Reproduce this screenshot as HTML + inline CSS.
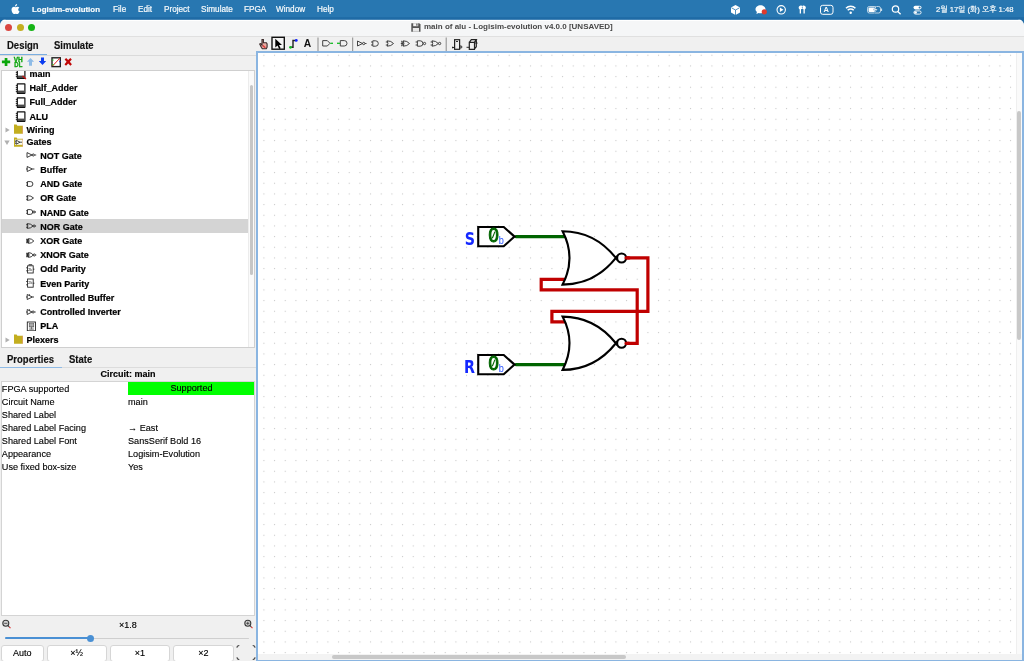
<!DOCTYPE html>
<html lang="ko">
<head>
<meta charset="utf-8">
<title>main of alu - Logisim-evolution v4.0.0 [UNSAVED]</title>
<style>
*{box-sizing:border-box;margin:0;padding:0}
html,body{width:1024px;height:661px;overflow:hidden}
body{position:relative;background:#1f6ba6;font-family:"Liberation Sans","NanumGothic",sans-serif;font-size:9px;color:#111}
.abs{position:absolute}
#menubar{will-change:transform;position:absolute;left:0;top:0;width:1024px;height:19px;background:linear-gradient(#2877b1 0,#2877b1 16.8px,#1f6ba6 17.6px,#1f6ba6 19px);color:#fff}
#menubar span{position:absolute;top:0.2px;height:19px;line-height:19px;font-size:8.2px;white-space:nowrap;color:#f6fafc;-webkit-text-stroke:0.2px #f6fafc}
#menubar .app{font-weight:bold;font-size:7.9px;-webkit-text-stroke:0.2px #f6fafc}
#win{will-change:transform;position:absolute;left:0;top:19px;width:1024px;height:642px;background:#f0f0f0;border-radius:6.5px 6.5px 0 0;overflow:hidden}
#wi{position:absolute;left:0;top:0;width:1024px;height:642px}
#titlebar{position:absolute;left:0;top:0;width:1024px;height:17.8px;background:linear-gradient(#1f6ba6 0,#1f6ba6 0.45px,#fff 0.75px,#fff 1.7px,#f5f6f7 2.1px,#f5f6f7 100%);border-bottom:1px solid #e0e0e0}
.tl{position:absolute;top:5.1px;width:7px;height:7px;border-radius:50%}
#title{position:absolute;left:424px;top:0.3px;height:16px;line-height:16px;font-size:8px;font-weight:bold;color:#484848;white-space:nowrap}
#left{position:absolute;left:0;top:0;width:256px;height:642px}
.tab{position:absolute;font-family:"Liberation Sans",sans-serif;font-weight:bold;font-size:9.5px;color:#111;-webkit-text-stroke:0.15px #111;white-space:nowrap;line-height:12px;transform:scaleY(1.08);transform-origin:0 80%}
#tree{position:absolute;left:1px;top:51px;width:254px;height:278px;background:#fff;border:1px solid #cfcfcf;overflow:hidden}
.row{position:absolute;left:0;width:246.2px;white-space:nowrap}
.row b{position:absolute;top:0;line-height:14.2px;font-size:9px;font-weight:bold;color:#000;-webkit-text-stroke:0.2px #000}
#ptable{position:absolute;left:1px;top:362px;width:254px;height:235px;background:#fff;border:1px solid #d4d4d4;overflow:hidden}
.prop{position:absolute;font-size:9.15px;line-height:13px;white-space:nowrap;color:#000;-webkit-text-stroke:0.12px #000}
.btn{position:absolute;height:17px;background:#fff;border:1px solid #d6d6d6;border-radius:3px;text-align:center;font-size:9px;line-height:15px;color:#000;-webkit-text-stroke:0.15px #000}
#canvas{position:absolute;left:256px;top:32px;width:768px;height:611px;background:#fff;border:2px solid #8ab5e1;overflow:hidden}
</style>
</head>
<body>
<div id="menubar">
  <svg class="abs" style="left:11px;top:4px" width="9" height="11" viewBox="0 0 9 11"><path d="M6.1 0c.1.7-.2 1.300-.6 1.700-.4.500-1 .8-1.500.7-.1-.6.200-1.300.6-1.700C5 .3 5.600 0 6.100 0zM8.300 3.700c-.1.100-1.100.7-1.100 1.900 0 1.400 1.300 1.900 1.300 1.900s-.9 2.600-2.100 2.600c-.6 0-1-.4-1.600-.4-.6 0-1.100.4-1.600.4C2.100 10.200.5 7.800.5 5.800c0-2 1.300-3 2.500-3 .7 0 1.300.4 1.700.4.400 0 1.100-.5 1.900-.5.700 0 1.300.4 1.700 1z" fill="#fff"/></svg>
  <span class="app" style="left:32px">Logisim-evolution</span>
  <span style="left:113px">File</span>
  <span style="left:138px">Edit</span>
  <span style="left:164px">Project</span>
  <span style="left:201px">Simulate</span>
  <span style="left:244px">FPGA</span>
  <span style="left:276px">Window</span>
  <span style="left:317px">Help</span>
  <span style="left:936px;font-size:7.700px">2월 17일 (화) 오후 1:48</span>
  <svg class="abs" style="left:724px;top:0" width="210" height="19" viewBox="724 0 210 19" fill="none" stroke="#fff" stroke-width="1">
    <path d="M731 7.500l4.500-2.500 4.500 2.500v5l-4.500 2.500-4.500-2.500z" fill="#fff" stroke="none"/><path d="M735.500 10v5" stroke="#2877b1" stroke-width="0.800"/><path d="M731.500 7.800l4 2.200 4-2.200" stroke="#2877b1" stroke-width="0.800"/>
    <path d="M755.500 9.300c0-2.300 2.300-4 5-4s5 1.700 5 4-2.300 4-5 4c-.6 0-1.200-.1-1.800-.3l-2.300 1 .5-2c-.9-.7-1.400-1.700-1.400-2.700z" fill="#fff" stroke="none"/><circle cx="764.300" cy="11.800" r="2.600" fill="#e0392b" stroke="none"/>
    <circle cx="781.200" cy="9.800" r="4.200" stroke-width="1.100"/><path d="M779.900 7.600v4.400l3.600-2.200z" fill="#fff" stroke="none"/>
    <path d="M799.500 6a1.900 1.900 0 1 1 1.500 3.300v4.200h-1.300v-4.100a2 2 0 0 1-.2-3.400zM805 6a1.900 1.900 0 1 0-1.500 3.300v4.200h1.300v-4.100a2 2 0 0 0 .2-3.400z" fill="#fff" stroke="none"/>
    <rect x="820.500" y="5.300" width="12.500" height="9" rx="2.200" stroke-width="1"/>
    <path d="M846 8.200a6.500 6.500 0 0 1 9.400 0M847.700 10.200a4.200 4.200 0 0 1 6 0" stroke-width="1.500"/><circle cx="850.700" cy="12.700" r="1.200" fill="#fff" stroke="none"/>
    <rect x="867.500" y="6.500" width="13" height="6.500" rx="1.800" stroke-width="0.900" opacity=".75"/><rect x="868.500" y="7.500" width="6.500" height="4.500" rx="1" fill="#fff" stroke="none"/><path d="M881.500 8.500v2.500" stroke-width="1.200" opacity=".75"/><path d="M875.500 6l-2 4h2l-1 3.500 3-4.500h-2l1-3z" fill="#fff" stroke="#2877b1" stroke-width="0.400"/>
    <circle cx="895.500" cy="9" r="3.200" stroke-width="1.200"/><path d="M897.800 11.500l2.800 2.800" stroke-width="1.300"/>
    <rect x="913.500" y="5.800" width="8" height="3.600" rx="1.800" fill="#fff" stroke="none"/><circle cx="919.600" cy="7.600" r="1" fill="#2877b1" stroke="none"/><rect x="913.900" y="10.900" width="7.200" height="3.200" rx="1.600" stroke-width="0.900"/><circle cx="915.600" cy="12.500" r="1.300" fill="#fff" stroke="none"/>
  </svg>
  <span style="left:823.500px;font-size:7.500px;font-weight:bold;top:0.300px;-webkit-text-stroke:0">A</span>
</div>
<div id="win"><div id="wi">
  <div id="titlebar">
    <div class="tl" style="left:4.700px;background:#da4640"></div>
    <div class="tl" style="left:16.700px;background:#c4ae20"></div>
    <div class="tl" style="left:28.400px;background:#16b416"></div>
    <svg class="abs" style="left:411px;top:3.800px" width="10" height="9" viewBox="0 0 10 9"><path d="M0.300 0.200h8l1.200 1.200v7.300h-9.200z" fill="#555"/><rect x="2.200" y="0.200" width="5" height="3" fill="#f2f2f2"/><rect x="5.300" y="0.600" width="1.200" height="2.100" fill="#555"/><rect x="1.800" y="5" width="6.200" height="3.700" fill="#e8e8e8"/></svg>
    <div id="title">main of alu - Logisim-evolution v4.0.0 [UNSAVED]</div>
  </div>
<div id="left">
<div class="tab" style="left:7px;top:20.800px">Design</div>
<div class="tab" style="left:54px;top:20.800px">Simulate</div>
<div class="abs" style="left:0;top:35.700px;width:256px;height:1px;background:#dadada"></div>
<div class="abs" style="left:0;top:34.5px;width:47px;height:1.5px;background:#7aaee0"></div>
<svg class="abs" style="left:0;top:37px" width="80" height="13" viewBox="0 56 80 13">
<path d="M4.700 57.900h2.700v2.700h2.800v2.700h-2.800v2.700h-2.700v-2.700h-2.800v-2.700h2.800z" fill="#0aa60a"/>
<text x="13.800" y="61.900" font-family="Liberation Sans,sans-serif" font-weight="bold" font-size="6.600" fill="#0aa60a" stroke="#0aa60a" stroke-width="0.300" textLength="9" lengthAdjust="spacingAndGlyphs">VH</text>
<text x="14.300" y="66.800" font-family="Liberation Sans,sans-serif" font-weight="bold" font-size="6.600" fill="#0aa60a" stroke="#0aa60a" stroke-width="0.300" textLength="8" lengthAdjust="spacingAndGlyphs">DL</text>
<path d="M30.500 57.900l3.600 3.900h-2.100v3.900h-3v-3.900h-2.100z" fill="#8ebbe6"/>
<path d="M42.500 65l3.700-3.900h-2.200v-3.700h-3v3.700h-2.200z" fill="#0a3cf0"/>
<rect x="52" y="57.800" width="8.300" height="8.800" fill="#fff" stroke="#222" stroke-width="1.400"/>
<path d="M52.500 66l7.500-8" stroke="#e02020" stroke-width="1" fill="none"/>
<rect x="52.300" y="59.500" width="1.200" height="1.200" fill="#1c1"/><rect x="52.300" y="64" width="1.200" height="1.200" fill="#1c1"/><rect x="59.300" y="61" width="1.200" height="1.200" fill="#22f"/>
<path d="M64.600 59.500l1.500-1.500 2.100 2.100 2.100-2.100 1.500 1.500-2 2.300 2.100 2.400-1.500 1.500-2.200-2.200-2.200 2.200-1.500-1.500 2.100-2.400z" fill="#c00808"/>
</svg>
<div id="tree">
<div class="row" style="top:-4.06px;height:14.22px"><svg class="abs" style="left:13px;top:1.5px" width="12" height="12" viewBox="0 0 12 12"><rect x="2.300" y="0.800" width="7.600" height="9.600" rx="0.300" fill="#fff" stroke="#111" stroke-width="1.200"/><rect x="2.900" y="7.600" width="6.400" height="2.400" fill="#4a4a4a"/><path d="M0.800 2.600h1.500M0.800 4.600h1.500M0.800 6.600h1.500M0.800 8.600h1.500" stroke="#111" stroke-width="0.900"/><path d="M7.500 8l3.500 3" stroke="#d01010" stroke-width="1.200"/></svg><b style="left:27.5px">main</b></div>
<div class="row" style="top:10.16px;height:14.22px"><svg class="abs" style="left:13px;top:1.5px" width="12" height="12" viewBox="0 0 12 12"><rect x="2.300" y="0.800" width="7.600" height="9.600" rx="0.300" fill="#fff" stroke="#111" stroke-width="1.200"/><rect x="2.900" y="7.600" width="6.400" height="2.400" fill="#4a4a4a"/><path d="M0.800 2.600h1.500M0.800 4.600h1.500M0.800 6.600h1.500M0.800 8.600h1.500" stroke="#111" stroke-width="0.900"/></svg><b style="left:27.5px">Half_Adder</b></div>
<div class="row" style="top:24.38px;height:14.22px"><svg class="abs" style="left:13px;top:1.5px" width="12" height="12" viewBox="0 0 12 12"><rect x="2.300" y="0.800" width="7.600" height="9.600" rx="0.300" fill="#fff" stroke="#111" stroke-width="1.200"/><rect x="2.900" y="7.600" width="6.400" height="2.400" fill="#4a4a4a"/><path d="M0.800 2.600h1.500M0.800 4.600h1.500M0.800 6.600h1.500M0.800 8.600h1.500" stroke="#111" stroke-width="0.900"/></svg><b style="left:27.5px">Full_Adder</b></div>
<div class="row" style="top:38.60px;height:14.22px"><svg class="abs" style="left:13px;top:1.5px" width="12" height="12" viewBox="0 0 12 12"><rect x="2.300" y="0.800" width="7.600" height="9.600" rx="0.300" fill="#fff" stroke="#111" stroke-width="1.200"/><rect x="2.900" y="7.600" width="6.400" height="2.400" fill="#4a4a4a"/><path d="M0.800 2.600h1.500M0.800 4.600h1.500M0.800 6.600h1.500M0.800 8.600h1.500" stroke="#111" stroke-width="0.900"/></svg><b style="left:27.5px">ALU</b></div>
<div class="row" style="top:52.82px;height:12.44px"><svg class="abs" style="left:2.500px;top:3.400px" width="6" height="6" viewBox="0 0 6 6"><path d="M0.500 0.400l4.200 2.600-4.200 2.600z" fill="#b0b0b0"/></svg><svg class="abs" style="left:11px;top:0.300px" width="12" height="11" viewBox="0 0 12 11"><path d="M1 0.600h2.600l0.800 1.200h5.300v7.900h-8.700z" fill="#c3ae1f"/><rect x="9.400" y="1.800" width="0.500" height="7.900" fill="#e06050" opacity=".7"/></svg><b style="left:24.5px;line-height:12.44px">Wiring</b></div>
<div class="row" style="top:65.26px;height:12.44px"><svg class="abs" style="left:2.200px;top:3.800px" width="6" height="6" viewBox="0 0 6 6"><path d="M0.300 0.600h5.400l-2.700 4.400z" fill="#b0b0b0"/></svg><svg class="abs" style="left:11px;top:0.300px" width="12" height="11" viewBox="0 0 12 11"><path d="M1 0.600h2.600l0.800 1.200h5.300v7.900h-8.700z" fill="#c3ae1f"/><rect x="9.400" y="1.800" width="0.500" height="7.900" fill="#e06050" opacity=".7"/><rect x="2" y="2.600" width="7.500" height="5.200" fill="#fbfbf4"/><path d="M3.200 3.200v4l3.800-2z M2 4.200h1.200M2 6.200h1.200M7 5.200h2" fill="none" stroke="#222" stroke-width="0.800"/></svg><b style="left:24.5px;line-height:12.44px">Gates</b></div>
<div class="row" style="top:77.70px;height:14.22px"><svg class="abs" style="left:24px;top:1.500px" width="11" height="10" viewBox="0 0 11 10"><path d="M1 2.600v4.800l5-2.400z" fill="none" stroke="#1c1c1c" stroke-width="0.850"/><circle cx="7.300" cy="5" r="1.050" fill="none" stroke="#1c1c1c" stroke-width="0.850"/><path d="M8.400 5h1.800" fill="none" stroke="#1c1c1c" stroke-width="0.850"/></svg><b style="left:38.300px">NOT Gate</b></div>
<div class="row" style="top:91.92px;height:14.22px"><svg class="abs" style="left:24px;top:1.500px" width="11" height="10" viewBox="0 0 11 10"><path d="M1.200 2.500v5l5.200-2.500zM6.400 5h2M0 5h1.200" fill="none" stroke="#1c1c1c" stroke-width="0.850"/></svg><b style="left:38.300px">Buffer</b></div>
<div class="row" style="top:106.14px;height:14.22px"><svg class="abs" style="left:24px;top:1.500px" width="11" height="10" viewBox="0 0 11 10"><path d="M1.500 2.600h3a2.400 2.400 0 0 1 0 4.800h-3zM0 3.800h1.500M0 6.200h1.500" fill="none" stroke="#1c1c1c" stroke-width="0.850"/></svg><b style="left:38.300px">AND Gate</b></div>
<div class="row" style="top:120.36px;height:14.22px"><svg class="abs" style="left:24px;top:1.500px" width="11" height="10" viewBox="0 0 11 10"><path d="M1.200 2.600q4 0 6.300 2.400q-2.300 2.400-6.300 2.400q1.300-2.400 0-4.800zM0 3.800h1.800M0 6.200h1.800" fill="none" stroke="#1c1c1c" stroke-width="0.850"/></svg><b style="left:38.300px">OR Gate</b></div>
<div class="row" style="top:134.58px;height:14.22px"><svg class="abs" style="left:24px;top:1.500px" width="11" height="10" viewBox="0 0 11 10"><path d="M1.500 2.600h2.800a2.400 2.400 0 0 1 0 4.800h-2.800zM0 3.800h1.500M0 6.200h1.500" fill="none" stroke="#1c1c1c" stroke-width="0.850"/><circle cx="8" cy="5" r="1.050" fill="none" stroke="#1c1c1c" stroke-width="0.850"/><path d="M9 5h1" fill="none" stroke="#1c1c1c" stroke-width="0.850"/></svg><b style="left:38.300px">NAND Gate</b></div>
<div class="row" style="top:148.80px;height:14.22px"><div class="abs" style="left:0;top:-1px;width:246.200px;height:14.22px;background:#d4d4d4"></div><svg class="abs" style="left:24px;top:1.500px" width="11" height="10" viewBox="0 0 11 10"><path d="M1.200 2.600q3.800 0 5.800 2.400q-2 2.400-5.800 2.400q1.300-2.400 0-4.800zM0 3.800h1.800M0 6.200h1.800" fill="none" stroke="#1c1c1c" stroke-width="0.850"/><circle cx="8.100" cy="5" r="1.050" fill="none" stroke="#1c1c1c" stroke-width="0.850"/><path d="M9.100 5h1" fill="none" stroke="#1c1c1c" stroke-width="0.850"/></svg><b style="left:38.300px">NOR Gate</b></div>
<div class="row" style="top:163.02px;height:14.22px"><svg class="abs" style="left:24px;top:1.500px" width="11" height="10" viewBox="0 0 11 10"><path d="M2.400 2.600q3.400 0 5.400 2.400q-2 2.400-5.400 2.400q1.300-2.400 0-4.800zM1 2.600q1.300 2.400 0 4.800M0 3.800h2.900M0 5h3M0 6.200h2.900" fill="none" stroke="#1c1c1c" stroke-width="0.850"/></svg><b style="left:38.300px">XOR Gate</b></div>
<div class="row" style="top:177.24px;height:14.22px"><svg class="abs" style="left:24px;top:1.500px" width="11" height="10" viewBox="0 0 11 10"><path d="M2.400 2.600q3.200 0 4.800 2.400q-1.600 2.400-4.800 2.400q1.300-2.400 0-4.800zM1 2.600q1.300 2.400 0 4.800M0 3.800h2.900M0 5h3M0 6.200h2.900" fill="none" stroke="#1c1c1c" stroke-width="0.850"/><circle cx="8.300" cy="5" r="1.050" fill="none" stroke="#1c1c1c" stroke-width="0.850"/><path d="M9.300 5h1" fill="none" stroke="#1c1c1c" stroke-width="0.850"/></svg><b style="left:38.300px">XNOR Gate</b></div>
<div class="row" style="top:191.46px;height:14.22px"><svg class="abs" style="left:24px;top:1.500px" width="11" height="10" viewBox="0 0 11 10"><rect x="1.600" y="1.800" width="5.600" height="7.200" fill="none" stroke="#1c1c1c" stroke-width="0.850"/><path d="M2.600 0.700h3.600M0.200 3.800h1.400M0.200 6.800h1.400M7.200 5.200h1.200" fill="none" stroke="#1c1c1c" stroke-width="0.850"/><text x="2.300" y="7" font-family="Liberation Sans,sans-serif" font-size="3.600" fill="#111">2k</text></svg><b style="left:38.300px">Odd Parity</b></div>
<div class="row" style="top:205.68px;height:14.22px"><svg class="abs" style="left:24px;top:1.500px" width="11" height="10" viewBox="0 0 11 10"><rect x="1.600" y="1" width="5.600" height="8.200" fill="none" stroke="#1c1c1c" stroke-width="0.850"/><path d="M0.200 3.500h1.400M0.200 6.800h1.400M7.200 5.200h1.200" fill="none" stroke="#1c1c1c" stroke-width="0.850"/><text x="2.200" y="6.300" font-family="Liberation Sans,sans-serif" font-size="4" fill="#111">2k</text></svg><b style="left:38.300px">Even Parity</b></div>
<div class="row" style="top:219.90px;height:14.22px"><svg class="abs" style="left:24px;top:1.500px" width="11" height="10" viewBox="0 0 11 10"><path d="M1.200 2.500v5l5.200-2.500zM6.400 5h1.600M0 5h1.200M3.400 2.200v1.400" fill="none" stroke="#1c1c1c" stroke-width="0.850"/></svg><b style="left:38.300px">Controlled Buffer</b></div>
<div class="row" style="top:234.12px;height:14.22px"><svg class="abs" style="left:24px;top:1.500px" width="11" height="10" viewBox="0 0 11 10"><path d="M1.200 2.500v5l4.800-2.500zM0 5h1.200M3.400 2.200v1.400" fill="none" stroke="#1c1c1c" stroke-width="0.850"/><circle cx="7.100" cy="5" r="1.050" fill="none" stroke="#1c1c1c" stroke-width="0.850"/><path d="M8.200 5h1.500" fill="none" stroke="#1c1c1c" stroke-width="0.850"/></svg><b style="left:38.300px">Controlled Inverter</b></div>
<div class="row" style="top:248.34px;height:14.22px"><svg class="abs" style="left:24px;top:1.500px" width="11" height="10" viewBox="0 0 11 10"><rect x="1.300" y="1" width="8.200" height="8.800" fill="#fff" stroke="#222" stroke-width="0.900"/><rect x="3.200" y="2.600" width="4.600" height="3.200" fill="#aaa" stroke="#444" stroke-width="0.500"/><path d="M3.200 7h4.600M3.200 8.300h4.600M5.500 5.800v2.500" stroke="#444" stroke-width="0.600"/></svg><b style="left:38.300px">PLA</b></div>
<div class="row" style="top:262.56px;height:12.44px"><svg class="abs" style="left:2.500px;top:3.400px" width="6" height="6" viewBox="0 0 6 6"><path d="M0.500 0.400l4.200 2.600-4.200 2.600z" fill="#b0b0b0"/></svg><svg class="abs" style="left:11px;top:0.300px" width="12" height="11" viewBox="0 0 12 11"><path d="M1 0.600h2.600l0.800 1.200h5.300v7.900h-8.700z" fill="#c3ae1f"/><rect x="9.400" y="1.800" width="0.500" height="7.900" fill="#e06050" opacity=".7"/></svg><b style="left:24.5px;line-height:12.44px">Plexers</b></div>
<div class="abs" style="left:246.200px;top:0;width:6.800px;height:277px;background:#fafafa;border-left:1px solid #ececec"></div>
<div class="abs" style="left:247.600px;top:14px;width:3.500px;height:190.300px;background:#c6c6c6;border-radius:2px"></div>
</div>
<div class="tab" style="left:7px;top:334.5px">Properties</div>
<div class="tab" style="left:69px;top:334.5px">State</div>
<div class="abs" style="left:0;top:348px;width:256px;height:1px;background:#dcdcdc"></div>
<div class="abs" style="left:0;top:347.500px;width:62px;height:1.500px;background:#8fbbe6"></div>
<div class="abs" style="left:0;top:349px;width:256px;height:13px;line-height:13px;text-align:center;font-weight:bold;font-size:9px;color:#000;-webkit-text-stroke:0.150px #000">Circuit: main</div>
<div id="ptable">
<div class="prop" style="left:-0.200px;top:0.70px">FPGA supported</div>
<div class="prop" style="left:126px;top:0.20px;width:127px;height:12.700px;line-height:13px;background:#00ff00;text-align:center">Supported</div>
<div class="prop" style="left:-0.200px;top:13.74px">Circuit Name</div>
<div class="prop" style="left:126px;top:13.74px">main</div>
<div class="prop" style="left:-0.200px;top:26.78px">Shared Label</div>
<div class="prop" style="left:-0.200px;top:39.82px">Shared Label Facing</div>
<div class="prop" style="left:126px;top:39.82px"><b>→</b> East</div>
<div class="prop" style="left:-0.200px;top:52.86px">Shared Label Font</div>
<div class="prop" style="left:126px;top:52.86px">SansSerif Bold 16</div>
<div class="prop" style="left:-0.200px;top:65.90px">Appearance</div>
<div class="prop" style="left:126px;top:65.90px">Logisim-Evolution</div>
<div class="prop" style="left:-0.200px;top:78.94px">Use fixed box-size</div>
<div class="prop" style="left:126px;top:78.94px">Yes</div>
</div>
<svg class="abs" style="left:1.400px;top:599.400px" width="12" height="13" viewBox="0 0 12 13"><circle cx="4.800" cy="5.300" r="3" fill="#d4d4d4" stroke="#3a3a3a" stroke-width="1.100"/><path d="M3.200 5.300h3.200" stroke="#333" stroke-width="0.800"/><path d="M7.200 7.700l1 1.100" stroke="#333" stroke-width="1.100"/><path d="M8.200 8.800l1.300 1.400" stroke="#d33" stroke-width="1.100"/></svg>
<svg class="abs" style="left:242.600px;top:599.400px" width="12" height="13" viewBox="0 0 12 13"><circle cx="4.800" cy="5.300" r="3" fill="#d4d4d4" stroke="#3a3a3a" stroke-width="1.100"/><path d="M3.200 5.300h3.200M4.800 3.700v3.200" stroke="#333" stroke-width="0.800"/><path d="M7.200 7.700l1 1.100" stroke="#333" stroke-width="1.100"/><path d="M8.200 8.800l1.300 1.400" stroke="#d33" stroke-width="1.100"/></svg>
<div class="abs" style="left:0;top:600px;width:256px;height:12px;line-height:12px;text-align:center;font-size:9px;color:#000;-webkit-text-stroke:0.150px #000">×1.8</div>
<div class="abs" style="left:5px;top:618.500px;width:244px;height:1.200px;background:#cfcfcf;border-radius:1px"></div>
<div class="abs" style="left:5px;top:618.300px;width:85px;height:1.500px;background:#4a90d4;border-radius:1px"></div>
<div class="abs" style="left:86.500px;top:615.500px;width:7px;height:7px;border-radius:50%;background:#4a90d4"></div>
<div class="btn" style="left:1px;top:626.200px;width:42.6px">Auto</div>
<div class="btn" style="left:46.6px;top:626.200px;width:60.3px">×½</div>
<div class="btn" style="left:109.6px;top:626.200px;width:60.4px">×1</div>
<div class="btn" style="left:172.8px;top:626.200px;width:61px">×2</div>
<svg class="abs" style="left:236px;top:625.300px" width="20" height="16" viewBox="0 0 20 16"><path d="M1 3.800q0-2.300 2.300-2.300M16.700 1.500q2.300 0 2.300 2.300M1 13.200q0 2.300 2.300 2.300M19 13.200q0 2.300-2.300 2.300" fill="none" stroke="#444" stroke-width="1.100"/></svg>
</div>
<svg class="abs" style="left:256px;top:17px" width="230" height="17" viewBox="256 36 230 17">
<g fill="none" stroke="#333" stroke-width="1">
<path d="M261.300 47.300l-1.600-3.200 1-.5 1.300 1.500v-5.600h1.400v3.200h3l.7 1.200v3.300l-.8 1.600h-4z" fill="#e9a9a0" stroke="#3a2a2a" stroke-width="1.100"/>
<path d="M262.800 45.500l2.600 2.200" stroke="#e03030" stroke-width="1.200"/>
<rect x="272" y="37.300" width="12.300" height="11.900" fill="#f4f4f4" stroke="#111" stroke-width="1.400"/>
<path d="M275.300 38.800v8.800l2.200-2.100 1.700 3.400 1.500-.7-1.700-3.300h3z" fill="#000" stroke="none"/>
<path d="M290.600 47.300h2.400v-6.800h3" stroke="#222" stroke-width="1.400"/><circle cx="290.500" cy="47.300" r="1.400" fill="#1b2" stroke="none"/><circle cx="296.300" cy="40.400" r="1.400" fill="#12f" stroke="none"/>
</g>
<text x="303.700" y="46.600" font-family="Liberation Sans,sans-serif" font-weight="bold" font-size="10.300" fill="#111">A</text>
<path d="M318 37.500v14M352.700 37.500v14M446.200 37.500v14" stroke="#8a8a8a" stroke-width="1"/>
<g fill="none" stroke="#3a3a3a" stroke-width="0.950">
<path d="M322.700 40.600h4.600l2.700 2.700-2.700 2.700h-4.600z"/><path d="M330.300 43.300h2.700" stroke="#1b2" stroke-width="1.300"/>
<path d="M340.300 40.600h4a2.700 2.700 0 0 1 0 5.400h-4z"/><path d="M337 43.300h3" stroke="#1b2" stroke-width="1.300"/>
<path d="M357.5 41.0v5l5-2.500zM365 43.5h1.500"/><circle cx="363.7" cy="43.5" r="1.150"/>
<path d="M372.8 40.8h2.800a2.700 2.700 0 0 1 0 5.400h-2.800zM371 42.0h1.8M371 45.0h1.8"/>
<path d="M387.2 40.8q4 0 6.300 2.700q-2.300 2.700-6.300 2.700q1.400-2.700 0-5.400zM385.8 42.0h2.2M385.8 45.0h2.2"/>
<path d="M403.2 40.8q4 0 6.300 2.700q-2.300 2.700-6.300 2.700q1.400-2.700 0-5.400zM401.8 42.0h2.2M401.8 45.0h2.2"/><path d="M401.600 40.8q1.400 2.700 0 5.400M400.800 43.5h2.800"/>
<path d="M417.40000000000003 40.8h2.800a2.700 2.700 0 0 1 0 5.400h-2.800zM415.6 42.0h1.8M415.6 45.0h1.8"/><circle cx="424.500" cy="43.5" r="1.150"/>
<path d="M432.0 40.8q4 0 6.300 2.700q-2.300 2.700-6.300 2.700q1.400-2.700 0-5.400zM430.6 42.0h2.2M430.6 45.0h2.2"/><circle cx="439.600" cy="43.5" r="1.150"/>
<rect x="454.600" y="39.700" width="5" height="9.600" stroke="#222" stroke-width="1.200"/><path d="M452 47.500h2.600M456 41.500h2" stroke="#222"/><circle cx="460.800" cy="47" r="1.100" stroke="#222"/><path d="M452.500 46.300l1.500 1.200-1.500 1.200z" fill="#222" stroke="none"/>
<path d="M469.300 42.300h5.200v7h-5.200zM469.300 42.300l2-2.600h5l-2 2.600M476.300 39.700v7l-1.800 2.300" stroke="#222" stroke-width="1.200"/><path d="M466.500 47.300h2.800" stroke="#222"/><path d="M475 43.500l1.400-2.500 1.400 2.500z" fill="#222" stroke="none"/>
</g></svg>
<div id="canvas">
<svg class="abs" style="left:0;top:0" width="766" height="608" viewBox="258 53 766 608">
<defs><pattern id="grid" x="258.550" y="49.920" width="10.6667" height="10.6667" patternUnits="userSpaceOnUse"><rect x="4.800" y="4.800" width="1.100" height="1.100" fill="#c8c8c8"/></pattern></defs>
<rect x="258" y="53" width="758" height="601.500" fill="url(#grid)"/>
<g fill="none" stroke-width="3.2" stroke-linecap="round" stroke-linejoin="miter">
<path d="M515.9 236.6H566.6" stroke="#006400"/>
<path d="M515.9 364.6H566.6" stroke="#006400"/>
<path d="M626.6 257.9H647.9V311.3H551.9V321.9H565.6" stroke="#c00000"/>
<path d="M626.6 343.3H637.2V289.9H541.2V279.3H565.6" stroke="#c00000"/>
</g>
<path d="M615.90 257.94 q-21.33 -26.67 -53.33 -26.67 q13.87 26.67 0 53.33 q32.00 0 53.33 -26.67z" fill="#fff" stroke="#000" stroke-width="2.130" stroke-linejoin="miter"/><circle cx="621.60" cy="257.94" r="4.500" fill="#fff" stroke="#000" stroke-width="2.130"/>
<path d="M615.90 343.27 q-21.33 -26.67 -53.33 -26.67 q13.87 26.67 0 53.33 q32.00 0 53.33 -26.67z" fill="#fff" stroke="#000" stroke-width="2.130" stroke-linejoin="miter"/><circle cx="621.60" cy="343.27" r="4.500" fill="#fff" stroke="#000" stroke-width="2.130"/>
<path d="M626.0 257.9h3M626.0 343.3h3" stroke="#c00000" stroke-width="3.2" stroke-linecap="round"/>
<path d="M478.23 227.00H503.73L514.53 236.60L503.73 246.20H478.23Z" fill="#fff" stroke="#000" stroke-width="2.130" stroke-linejoin="miter"/><text x="493.63" y="242.50" text-anchor="middle" font-family="Liberation Sans,sans-serif" font-size="21" fill="#006400" stroke="#006400" stroke-width="1.100" transform="translate(493.63 0) scale(0.880 1) translate(-493.63 0)">0</text><path d="M492.33 238.20L494.93 231.60" stroke="#006400" stroke-width="1.100"/><text x="498.73" y="244.10" font-family="Liberation Sans,sans-serif" font-size="10.800" fill="#2a55ff" transform="translate(498.73 0) scale(0.850 1) translate(-498.73 0)">b</text><text x="475.03" y="245.10" text-anchor="end" font-family="DejaVu Sans,sans-serif" font-weight="bold" font-size="17.800" fill="#1428ff" transform="translate(475.03 0) scale(0.800 1) translate(-475.03 0)">S</text>
<path d="M478.23 355.00H503.73L514.53 364.60L503.73 374.20H478.23Z" fill="#fff" stroke="#000" stroke-width="2.130" stroke-linejoin="miter"/><text x="493.63" y="370.50" text-anchor="middle" font-family="Liberation Sans,sans-serif" font-size="21" fill="#006400" stroke="#006400" stroke-width="1.100" transform="translate(493.63 0) scale(0.880 1) translate(-493.63 0)">0</text><path d="M492.33 366.20L494.93 359.60" stroke="#006400" stroke-width="1.100"/><text x="498.73" y="372.10" font-family="Liberation Sans,sans-serif" font-size="10.800" fill="#2a55ff" transform="translate(498.73 0) scale(0.850 1) translate(-498.73 0)">b</text><text x="475.03" y="373.10" text-anchor="end" font-family="DejaVu Sans,sans-serif" font-weight="bold" font-size="17.800" fill="#1428ff" transform="translate(475.03 0) scale(0.800 1) translate(-475.03 0)">R</text>
</svg>
<div class="abs" style="left:757.500px;top:0;width:6.500px;height:600.800px;background:#fafafa;border-left:1px solid #efefef"></div>
<div class="abs" style="left:759px;top:58px;width:4px;height:229px;background:#c8c8c8;border-radius:2px"></div>
<div class="abs" style="left:0;top:600.800px;width:764px;height:6.500px;background:#f3f3f3"></div>
<div class="abs" style="left:74px;top:601.900px;width:294px;height:3.800px;background:#c8c8c8;border-radius:2px"></div>
</div>
</div></div>
</body>
</html>
